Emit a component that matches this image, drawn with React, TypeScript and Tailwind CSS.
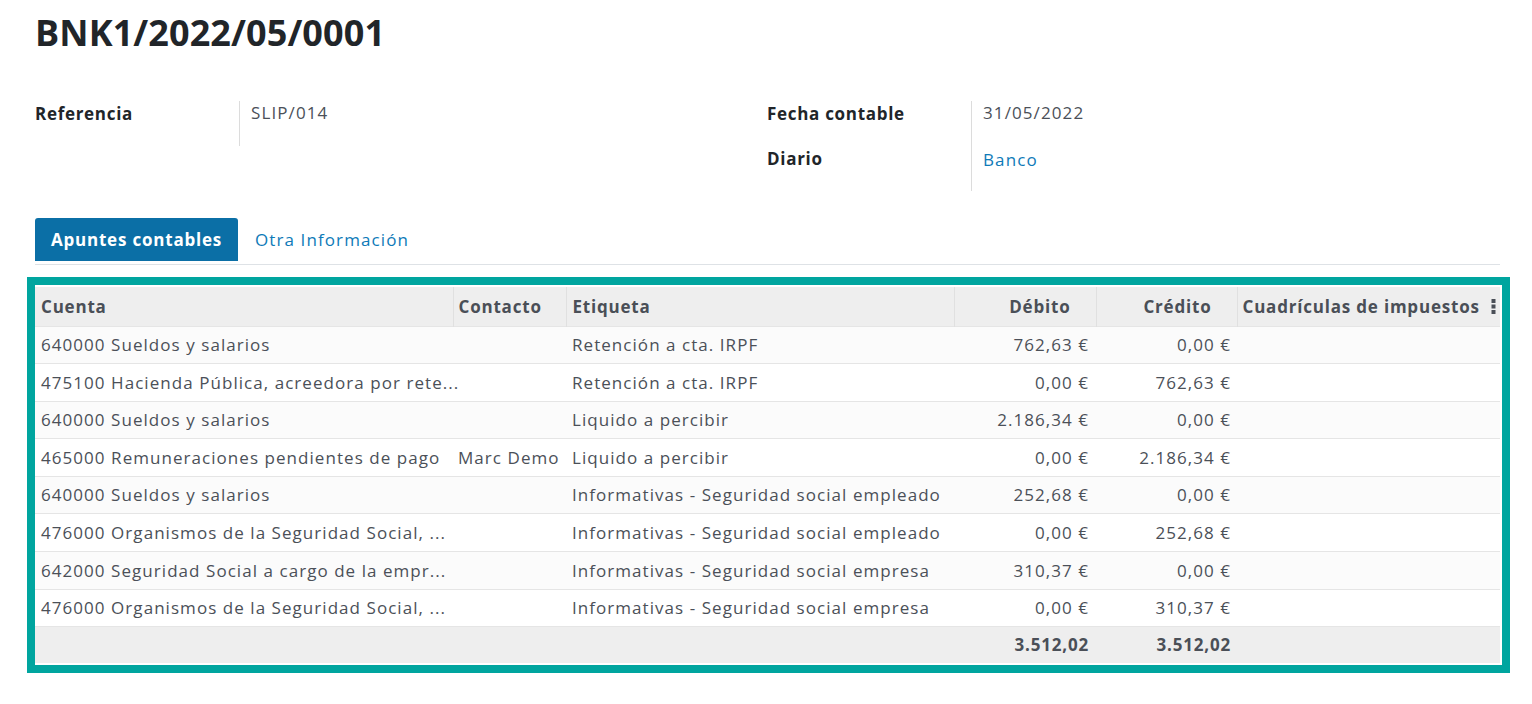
import React from "react";

const rows = [
  ["640000 Sueldos y salarios", "", "Retención a cta. IRPF", "762,63 €", "0,00 €"],
  ["475100 Hacienda Pública, acreedora por rete...", "", "Retención a cta. IRPF", "0,00 €", "762,63 €"],
  ["640000 Sueldos y salarios", "", "Liquido a percibir", "2.186,34 €", "0,00 €"],
  ["465000 Remuneraciones pendientes de pago", "Marc Demo", "Liquido a percibir", "0,00 €", "2.186,34 €"],
  ["640000 Sueldos y salarios", "", "Informativas - Seguridad social empleado", "252,68 €", "0,00 €"],
  ["476000 Organismos de la Seguridad Social, ...", "", "Informativas - Seguridad social empleado", "0,00 €", "252,68 €"],
  ["642000 Seguridad Social a cargo de la empr...", "", "Informativas - Seguridad social empresa", "310,37 €", "0,00 €"],
  ["476000 Organismos de la Seguridad Social, ...", "", "Informativas - Seguridad social empresa", "0,00 €", "310,37 €"],
];

export default function App() {
  return (
    <div
      className="w-[1532px] h-[704px] bg-white overflow-hidden text-[#4b5058]"
      style={{ fontFamily: '"Open Sans", "Liberation Sans", sans-serif' }}
    >
      <div className="pl-[35px] pr-[32px] pt-[9px]">
        <h1 className="text-[36px] leading-[48px] font-bold text-[#212529] tracking-[0.1px]">
          BNK1/2022/05/0001
        </h1>

        <div className="mt-[44px] flex">
          <div className="w-[732px] flex">
            <div className="w-[204px] pt-[1px] text-[17px] tracking-[0.7px] font-bold text-[#212529] leading-[24px]">Referencia</div>
            <div className="border-l border-[#dcdcdc] pl-[11px] h-[45px] text-[17px] tracking-[1.1px] leading-[24px]">SLIP/014</div>
          </div>
          <div className="flex">
            <div className="w-[204px] flex flex-col gap-[21px] pt-[1px] text-[17px] tracking-[0.7px] font-bold text-[#212529] leading-[24px]">
              <div>Fecha contable</div>
              <div>Diario</div>
            </div>
            <div className="border-l border-[#dcdcdc] pl-[11px] h-[90px] flex flex-col gap-[23px] text-[17px] tracking-[1.1px] leading-[24px]">
              <div>31/05/2022</div>
              <div className="text-[#0e7ab8]">Banco</div>
            </div>
          </div>
        </div>

        <div className="mt-[27px] flex items-end border-b border-[#dee2e6]">
          <div className="h-[43px] flex items-center justify-center whitespace-nowrap bg-[#0b6fa6] text-white font-bold text-[17px] tracking-[0.8px] rounded-t-[3px] w-[203px] mb-[3px]">
            Apuntes contables
          </div>
          <div className="h-[43px] px-[17px] flex items-center whitespace-nowrap text-[#0e7ab8] text-[17px] tracking-[1.1px] mb-[3px]">
            Otra Información
          </div>
        </div>
      </div>

      <div className="ml-[27px] mt-[12px] w-[1483px] border-[8px] border-[#00a59f] pt-[2px] pr-[2px] pb-[2px]">
        <table className="w-[1465px] table-fixed border-collapse text-[17px] tracking-[1.05px]">
          <colgroup>
            <col className="w-[418px]" />
            <col className="w-[113px]" />
            <col className="w-[388px]" />
            <col className="w-[142px]" />
            <col className="w-[141px]" />
            <col className="w-[263px]" />
          </colgroup>
          <thead>
            <tr className="h-[39px] bg-[#eeeeee] font-bold text-[#4a4f57] tracking-[0.8px]">
              <th className="text-left pl-[6px] border-r border-[#e0e0e0]">Cuenta</th>
              <th className="text-left pl-[5px] border-r border-[#e0e0e0]">Contacto</th>
              <th className="text-left pl-[6px] border-r border-[#e0e0e0]">Etiqueta</th>
              <th className="text-right pr-[25px] border-r border-[#e0e0e0]">Débito</th>
              <th className="text-right pr-[25px] border-r border-[#e0e0e0]">Crédito</th>
              <th className="text-left pl-[5px]">
                <div className="flex items-center justify-between pr-[4px] whitespace-nowrap">
                  <span>Cuadrículas de impuestos</span>
                  <svg width="5" height="16" viewBox="0 0 5 16">
                    <rect x="0.5" y="1" width="4" height="4" fill="#4a4f57" />
                    <rect x="0.5" y="6.5" width="4" height="4" fill="#4a4f57" />
                    <rect x="0.5" y="12" width="4" height="4" fill="#4a4f57" />
                  </svg>
                </div>
              </th>
            </tr>
          </thead>
          <tbody>
            {rows.map((r, i) => (
              <tr
                key={i}
                className={`h-[37.6px] border-t border-[#e5e5e5] ${i % 2 === 0 ? "bg-[#fbfbfb]" : "bg-white"}`}
              >
                <td className="pl-[6px] whitespace-nowrap">{r[0]}</td>
                <td className="pl-[5px] whitespace-nowrap">{r[1]}</td>
                <td className="pl-[6px] whitespace-nowrap">{r[2]}</td>
                <td className="text-right pr-[7px] whitespace-nowrap">{r[3]}</td>
                <td className="text-right pr-[6px] whitespace-nowrap">{r[4]}</td>
                <td></td>
              </tr>
            ))}
            <tr className="h-[36px] bg-[#eeeeee] font-bold text-[#4a4f57] tracking-[0.8px] border-t border-[#e5e5e5]">
              <td></td>
              <td></td>
              <td></td>
              <td className="text-right pr-[7px]">3.512,02</td>
              <td className="text-right pr-[6px]">3.512,02</td>
              <td></td>
            </tr>
          </tbody>
        </table>
      </div>
    </div>
  );
}
